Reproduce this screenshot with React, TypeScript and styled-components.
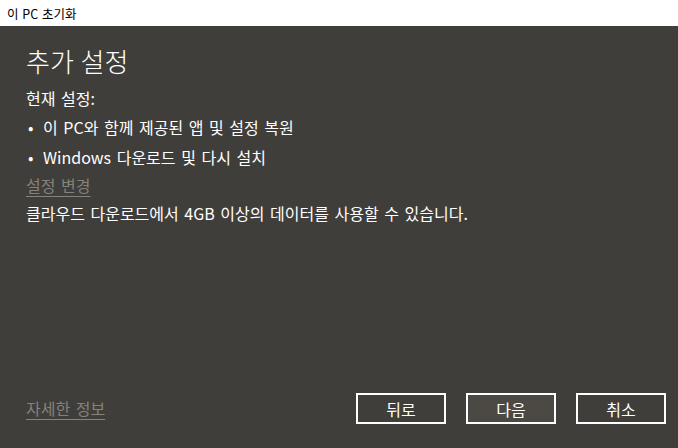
import React from 'react';
import styled, { createGlobalStyle } from 'styled-components';

const GlobalStyle = createGlobalStyle`
  html, body {
    margin: 0;
    padding: 0;
    width: 678px;
    height: 448px;
    overflow: hidden;
    font-family: "Noto Sans CJK KR", "Noto Sans", sans-serif;
  }
`;

const Window = styled.div`
  display: flex;
  flex-direction: column;
  width: 678px;
  height: 448px;
`;

const TitleBar = styled.div`
  display: flex;
  align-items: center;
  height: 26px;
  padding-left: 7px;
  background: #ffffff;
  color: #000000;
  font-size: 12.5px;
  word-spacing: 1px;
`;

const Body = styled.div`
  flex: 1;
  display: flex;
  flex-direction: column;
  padding: 0 12px 24px 26px;
  background: #403e3a;
  color: #ffffff;
  font-size: 16px;
  word-spacing: 2px;
`;

const Heading = styled.h1`
  margin: 15px 0 4px;
  font-size: 26px;
  font-weight: 300;
  line-height: 40px;
  word-spacing: 1px;
`;

const Line = styled.div<{ $h: number }>`
  line-height: ${({ $h }) => $h}px;
  white-space: nowrap;
`;

const List = styled.ul`
  margin: 0 0 -1px;
  padding: 0;
  list-style: none;
`;

const Item = styled.li`
  display: flex;
  line-height: 30px;

  &::before {
    content: '•';
    width: 15px;
    padding-left: 2px;
  }
`;

const Link = styled.span<{ $h: number }>`
  align-self: flex-start;
  line-height: ${({ $h }) => $h}px;
  color: #85827c;
  text-decoration: underline;
  text-underline-offset: 4px;
`;

const Footer = styled.div`
  margin-top: auto;
  display: flex;
  align-items: center;
  gap: 20px;
`;

const Spacer = styled.div`
  flex: 1;
`;

const Button = styled.button<{ $focus?: boolean }>`
  width: 90px;
  height: 31px;
  border: 2px solid #ffffff;
  background: ${({ $focus }) => ($focus ? '#4c4945' : 'transparent')};
  color: #ffffff;
  font-family: inherit;
  font-size: 16px;
  padding: 0;
`;

export default function App() {
  return (
    <Window>
      <GlobalStyle />
      <TitleBar>이 PC 초기화</TitleBar>
      <Body>
        <Heading>추가 설정</Heading>
        <Line $h={27}>현재 설정:</Line>
        <List>
          <Item>이 PC와 함께 제공된 앱 및 설정 복원</Item>
          <Item>Windows 다운로드 및 다시 설치</Item>
        </List>
        <Link $h={29}>설정 변경</Link>
        <Line $h={27}>클라우드 다운로드에서 4GB 이상의 데이터를 사용할 수 있습니다.</Line>
        <Footer>
          <Link $h={30}>자세한 정보</Link>
          <Spacer />
          <Button>뒤로</Button>
          <Button $focus>다음</Button>
          <Button>취소</Button>
        </Footer>
      </Body>
    </Window>
  );
}
